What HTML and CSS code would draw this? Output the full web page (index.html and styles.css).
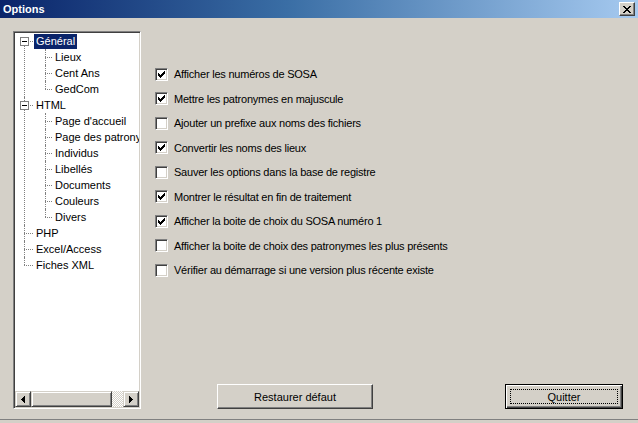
FILE: index.html
```html
<!DOCTYPE html>
<html>
<head>
<meta charset="utf-8">
<link rel="stylesheet" href="styles.css">
</head>
<body>
<div class="window">
  <div class="titlebar">
    <span class="title">Options</span>
    <button class="close" aria-label="Fermer">
      <svg width="8" height="7" viewBox="0 0 8 7" shape-rendering="crispEdges">
        <path fill="#000" d="M0 0h2v1H0zM6 0h2v1H6zM1 1h2v1H1zM5 1h2v1H5zM2 2h4v1H2zM3 3h2v1H3zM2 4h4v1H2zM1 5h2v1H1zM5 5h2v1H5zM0 6h2v1H0zM6 6h2v1H6z"/>
      </svg>
    </button>
  </div>
  <div class="content">
    <div class="treebox">
      <ul class="tree">
        <li class="open">
          <span class="exp"><svg width="9" height="9" viewBox="0 0 9 9" shape-rendering="crispEdges"><rect x="0.5" y="0.5" width="8" height="8" fill="#fff" stroke="#808080"/><path d="M2 4h5v1H2z" fill="#000"/></svg></span>
          <div class="row"><span class="lbl sel">Général</span></div>
          <ul class="children">
            <li><div class="row"><span class="lbl">Lieux</span></div></li>
            <li><div class="row"><span class="lbl">Cent Ans</span></div></li>
            <li><div class="row"><span class="lbl">GedCom</span></div></li>
          </ul>
        </li>
        <li class="open">
          <span class="exp"><svg width="9" height="9" viewBox="0 0 9 9" shape-rendering="crispEdges"><rect x="0.5" y="0.5" width="8" height="8" fill="#fff" stroke="#808080"/><path d="M2 4h5v1H2z" fill="#000"/></svg></span>
          <div class="row"><span class="lbl">HTML</span></div>
          <ul class="children">
            <li><div class="row"><span class="lbl">Page d'accueil</span></div></li>
            <li><div class="row"><span class="lbl">Page des patronymes</span></div></li>
            <li><div class="row"><span class="lbl">Individus</span></div></li>
            <li><div class="row"><span class="lbl">Libellés</span></div></li>
            <li><div class="row"><span class="lbl">Documents</span></div></li>
            <li><div class="row"><span class="lbl">Couleurs</span></div></li>
            <li><div class="row"><span class="lbl">Divers</span></div></li>
          </ul>
        </li>
        <li><div class="row"><span class="lbl">PHP</span></div></li>
        <li><div class="row"><span class="lbl">Excel/Access</span></div></li>
        <li><div class="row"><span class="lbl">Fiches XML</span></div></li>
      </ul>
      <div class="hscroll">
        <div class="sbtn"><svg width="4" height="7" viewBox="0 0 4 7" shape-rendering="crispEdges"><path d="M3 0h1v7H3zM2 1h1v5H2zM1 2h1v3H1zM0 3h1v1H0z" fill="#000"/></svg></div>
        <div class="thumb"></div>
        <div class="track"></div>
        <div class="sbtn"><svg width="4" height="7" viewBox="0 0 4 7" shape-rendering="crispEdges"><path d="M0 0h1v7H0zM1 1h1v5H1zM2 2h1v3H2zM3 3h1v1H3z" fill="#000"/></svg></div>
      </div>
    </div>
    <div class="main">
      <div class="options">
        <label class="opt"><span class="cb on"></span>Afficher les numéros de SOSA</label>
        <label class="opt"><span class="cb on"></span>Mettre les patronymes en majuscule</label>
        <label class="opt"><span class="cb"></span>Ajouter un prefixe aux noms des fichiers</label>
        <label class="opt"><span class="cb on"></span>Convertir les noms des lieux</label>
        <label class="opt"><span class="cb"></span>Sauver les options dans la base de registre</label>
        <label class="opt"><span class="cb on"></span>Montrer le résultat en fin de traitement</label>
        <label class="opt"><span class="cb on"></span>Afficher la boite de choix du SOSA numéro 1</label>
        <label class="opt"><span class="cb"></span>Afficher la boite de choix des patronymes les plus présents</label>
        <label class="opt"><span class="cb"></span>Vérifier au démarrage si une version plus récente existe</label>
      </div>
      <div class="buttons">
        <button class="btn restore">Restaurer défaut</button>
        <button class="btn default quit"><span>Quitter</span></button>
      </div>
    </div>
  </div>
  <div class="bottomedge"></div>
</div>
</body>
</html>
```
FILE: styles.css
```css
* { box-sizing: border-box; }
html, body { margin: 0; padding: 0; }
body {
  background: #d4d0c8;
  font: 11px "Liberation Sans", Arial, sans-serif;
  color: #000;
}
.window {
  width: 638px;
  height: 423px;
  display: flex;
  flex-direction: column;
  background: #d4d0c8;
  overflow: hidden;
}
.titlebar {
  height: 18px;
  flex: none;
  display: flex;
  align-items: center;
  justify-content: space-between;
  padding: 0 3px 0 3px;
  background: linear-gradient(to right, #0a246a 0%, #3a6ea5 45%, #a6caf0 100%);
  color: #fff;
  font-weight: bold;
}
.title { line-height: 18px; }
.close {
  width: 16px;
  height: 14px;
  padding: 0;
  display: flex;
  align-items: center;
  justify-content: center;
  background: #d4d0c8;
  border: 1px solid;
  border-color: #fff #404040 #404040 #fff;
  box-shadow: inset -1px -1px #808080;
}
.content {
  flex: 1;
  display: flex;
  padding: 13px 15px 10px 13px;
}
.treebox {
  width: 128px;
  flex: none;
  display: flex;
  flex-direction: column;
  background: #fff;
  border: 1px solid;
  border-color: #808080 #fff #fff #808080;
  box-shadow: inset 1px 1px #404040, inset -1px -1px #d4d0c8;
  padding: 1px;
}
.tree, .tree ul {
  list-style: none;
  margin: 0;
  padding: 0;
}
.tree {
  flex: 1;
  overflow: hidden;
}
.tree li {
  position: relative;
  padding-left: 19px;
}
.tree > li::before {
  content: "";
  position: absolute;
  left: 9px;
  top: 8px;
  width: 9px;
  border-top: 1px dotted #808080;
}
.tree > li::after {
  content: "";
  position: absolute;
  left: 9px;
  top: 0;
  bottom: 0;
  border-left: 1px dotted #808080;
}
.tree > li:first-child::after { top: 8px; }
.tree > li:last-child::after { bottom: auto; height: 8px; }
.children > li::before {
  content: "";
  position: absolute;
  left: 11px;
  top: 8px;
  width: 7px;
  border-top: 1px dotted #808080;
}
.children > li::after {
  content: "";
  position: absolute;
  left: 11px;
  top: 0;
  bottom: 0;
  border-left: 1px dotted #808080;
}
.children > li:last-child::after { bottom: auto; height: 8px; }
.exp {
  position: absolute;
  left: 5px;
  top: 4px;
  width: 9px;
  height: 9px;
  z-index: 1;
  line-height: 0;
}
.row {
  height: 16px;
  white-space: nowrap;
  display: flex;
  align-items: center;
}
.lbl {
  display: inline-block;
  height: 15px;
  line-height: 15px;
  padding: 0 2px;
}
.lbl.sel {
  background: #0a246a;
  color: #fff;
}
.hscroll {
  height: 16px;
  flex: none;
  display: flex;
}
.sbtn, .thumb {
  background: #d4d0c8;
  border: 1px solid;
  border-color: #d4d0c8 #404040 #404040 #d4d0c8;
  box-shadow: inset 1px 1px #fff, inset -1px -1px #808080;
}
.sbtn {
  width: 16px;
  flex: none;
  display: flex;
  align-items: center;
  justify-content: center;
}
.thumb { width: 81px; flex: none; }
.track {
  flex: 1;
  background-color: #d4d0c8;
  background-image: repeating-conic-gradient(#ffffff 0 25%, #d4d0c8 0 50%);
  background-size: 2px 2px;
}
.main {
  flex: 1;
  margin-left: 14px;
  display: flex;
  flex-direction: column;
  justify-content: space-between;
}
.options {
  padding-top: 31px;
  display: flex;
  flex-direction: column;
}
.opt {
  height: 24.5px;
  display: flex;
  align-items: center;
  white-space: nowrap;
  letter-spacing: -0.22px;
}
.cb {
  width: 13px;
  height: 13px;
  flex: none;
  margin-right: 6px;
  background: #fff;
  border: 1px solid;
  border-color: #808080 #fff #fff #808080;
  box-shadow: inset 1px 1px #404040, inset -1px -1px #d4d0c8;
}
.cb.on {
  background: #fff url("data:image/svg+xml,%3Csvg xmlns='http://www.w3.org/2000/svg' width='7' height='7' shape-rendering='crispEdges'%3E%3Cpath d='M6 0h1v3H6zM5 1h1v3H5zM4 2h1v3H4zM3 3h1v3H3zM2 4h1v3H2zM1 3h1v3H1zM0 2h1v3H0z' fill='%23000'/%3E%3C/svg%3E") no-repeat 2px 2px;
}
.buttons {
  display: flex;
  justify-content: space-between;
  padding-left: 62px;
}
.btn {
  height: 25px;
  padding: 0;
  font: inherit;
  color: #000;
  background: #d4d0c8;
  border: 1px solid;
  border-color: #fff #404040 #404040 #fff;
  box-shadow: inset -1px -1px #808080;
}
.restore { width: 156px; }
.quit {
  width: 118px;
  position: relative;
  border: 1px solid #000;
  box-shadow: inset 1px 1px #fff, inset -1px -1px #404040, inset -2px -2px #808080;
}
.quit::after {
  content: "";
  position: absolute;
  left: 4px;
  top: 4px;
  right: 4px;
  bottom: 4px;
  border: 1px dotted #000;
}
.bottomedge {
  height: 4px;
  flex: none;
  border-top: 1px solid #808080;
  background: #d4d0c8;
}
```
